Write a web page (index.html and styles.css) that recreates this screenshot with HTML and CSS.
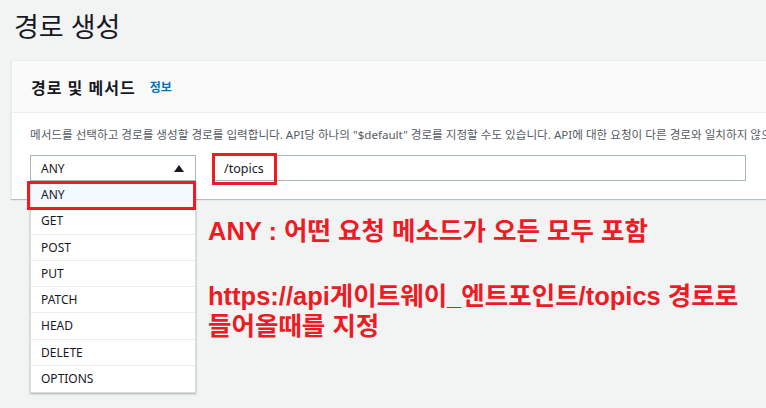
FILE: index.html
```html
<html>
  <head>
    <meta charset="UTF-8">
    <title>경로 생성</title>
    <link rel="stylesheet" href="styles.css">
  </head>
  <body>
    <h1 class="page-title">경로 생성</h1>

    <div class="card">
      <div class="card-header">
        <h2>경로 및 메서드</h2>
        <a class="info-link" href="#">정보</a>
      </div>
      <div class="card-body">
        <p class="desc">메서드를 선택하고 경로를 생성할 경로를 입력합니다. API당 하나의 "$default" 경로를 지정할 수도 있습니다. API에 대한 요청이 다른 경로와 일치하지 않으면 이 경로로 전달됩니다.</p>
        <div class="controls">
          <div class="select">
            <div class="select-box">
              <span>ANY</span>
              <span class="caret"></span>
            </div>
            <ul class="menu">
              <li class="selected">ANY</li>
              <li>GET</li>
              <li>POST</li>
              <li>PUT</li>
              <li>PATCH</li>
              <li>HEAD</li>
              <li>DELETE</li>
              <li>OPTIONS</li>
            </ul>
            <div class="mark mark-any"></div>
          </div>
          <div class="path-input">
            <span>/topics</span>
            <div class="mark mark-path"></div>
          </div>
        </div>
      </div>
    </div>

    <div class="note">
      <p>ANY : 어떤 요청 메소드가 오든 모두 포함</p>
      <p class="gap">https://api게이트웨이_엔트포인트/topics 경로로<br>들어올때를 지정</p>
    </div>
  </body>
</html>
```

FILE: styles.css
```css
body {
  margin: 0;
  background-color: #f2f3f3;
  font-family: "Noto Sans", "Noto Sans CJK KR", sans-serif;
  color: #16191f;
  overflow: hidden;
}
.page-title {
  margin: 0;
  padding: 10px 14px 0;
  height: 60px;
  box-sizing: border-box;
  font-size: 27px;
  font-weight: normal;
  line-height: 34px;
}
.card {
  margin-left: 11px;
  width: 800px;
  background: white;
  border-top: 1px solid #eaeded;
  border-left: 1px solid #eaeded;
  box-shadow: 0 1px 1px rgba(0, 31, 63, 0.25);
}
.card-header {
  background: #fafafa;
  height: 51px;
  padding: 0 19px;
  display: flex;
  align-items: center;
  border-bottom: 1px solid #eaeded;
}
.card-header h2 {
  margin: 0;
  font-size: 16px;
  font-weight: bold;
  letter-spacing: 1px;
}
.info-link {
  margin-left: 14px;
  font-size: 12px;
  font-weight: bold;
  color: #0073bb;
  text-decoration: none;
}
.card-body {
  padding: 13px 18px 18px;
}
.desc {
  margin: 0 0 11px;
  font-size: 11.6px;
  color: #545b64;
  white-space: nowrap;
  line-height: 18px;
}
.controls {
  display: flex;
  gap: 16px;
}
.select {
  position: relative;
  width: 166px;
}
.select-box {
  height: 26px;
  box-sizing: border-box;
  border: 1px solid #aab7b8;
  display: flex;
  align-items: center;
  justify-content: space-between;
  padding: 0 11px 0 10px;
  font-size: 12px;
}
.caret {
  width: 0;
  height: 0;
  border-left: 5px solid transparent;
  border-right: 5px solid transparent;
  border-bottom: 7px solid #16191f;
}
.menu {
  position: absolute;
  top: 26px;
  left: 0;
  width: 166px;
  margin: 0;
  padding: 0;
  list-style: none;
  background: white;
  box-sizing: border-box;
  border: 1px solid #d5dbdb;
  box-shadow: 0 1px 2px rgba(0, 28, 36, 0.3);
  z-index: 2;
}
.menu li {
  height: 26.3px;
  box-sizing: border-box;
  padding-left: 10px;
  line-height: 26px;
  font-size: 12px;
  border-bottom: 1px solid #eaeded;
}
.menu li:last-child {
  border-bottom: none;
}
.menu li.selected {
  background: #f1faff;
}
.path-input {
  position: relative;
  width: 534px;
  height: 26px;
  box-sizing: border-box;
  border: 1px solid #aab7b8;
  padding-left: 11px;
  display: flex;
  align-items: center;
  font-size: 12.5px;
}
.mark {
  position: absolute;
  border: 3px solid #ed1c24;
  box-sizing: border-box;
  z-index: 3;
}
.mark-any {
  left: -3px;
  top: 26px;
  width: 169px;
  height: 29px;
}
.mark-path {
  left: -1px;
  top: -3px;
  width: 65px;
  height: 32px;
}
.note {
  margin-left: 208px;
  padding-top: 17px;
  color: #ed1c24;
  font-family: "Liberation Sans", "Noto Sans CJK KR", sans-serif;
  font-size: 25.5px;
  font-weight: bold;
  line-height: 30px;
}
.note p {
  margin: 0;
}
.note .gap {
  margin-top: 35px;
}
```
